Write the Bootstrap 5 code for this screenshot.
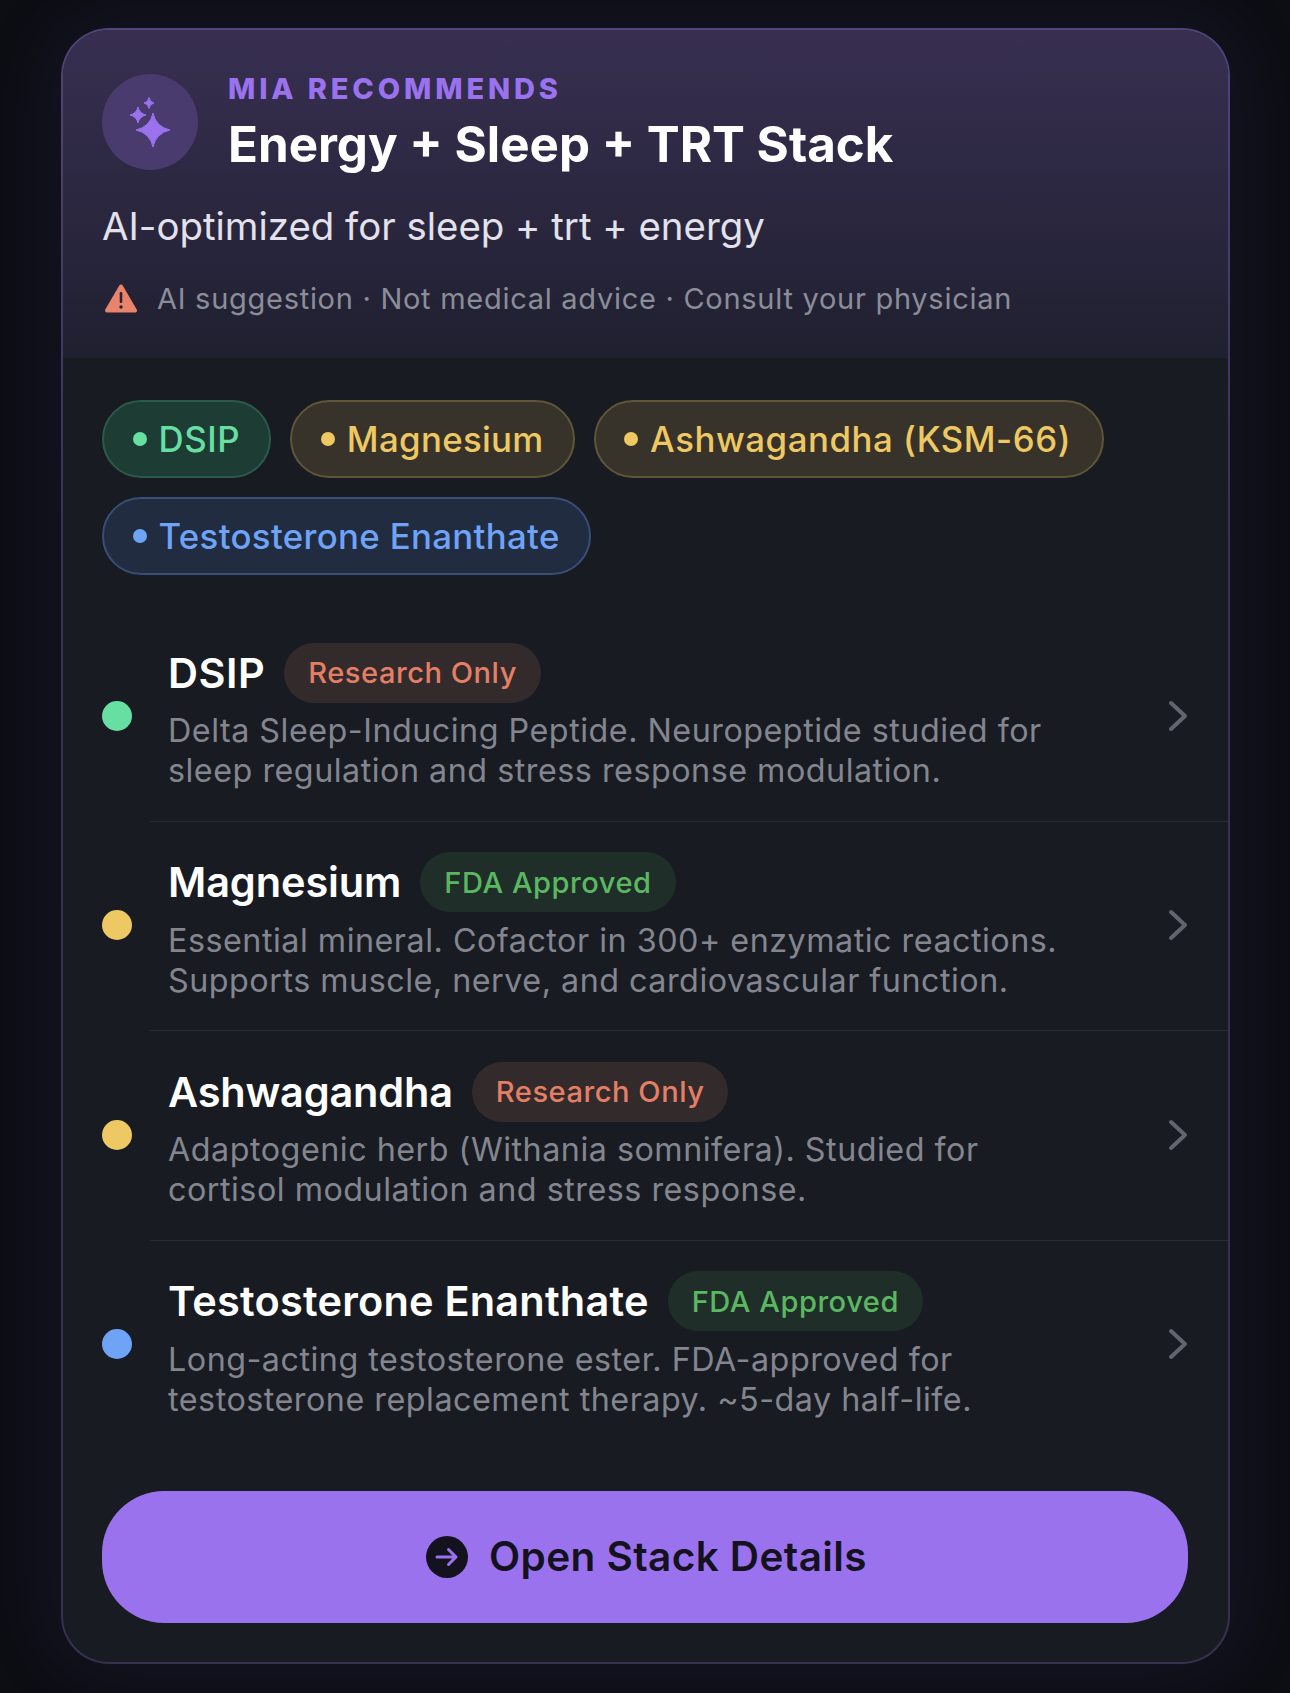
<!DOCTYPE html>
<html lang="en">
<head>
<meta charset="utf-8">
<title>Mia Recommends</title>
<link href="https://cdn.jsdelivr.net/npm/bootstrap@5.3.0/dist/css/bootstrap.min.css" rel="stylesheet">
<style>
html,body{height:100%}
body{background:#0c0e13;font-family:Inter,"Liberation Sans",sans-serif;color:#fff;overflow:hidden}
.stage{padding:28px 60px 30px 61px;height:1693px}
.panel{height:1636px;border:2px solid transparent;border-radius:48px;background:linear-gradient(#181b22,#181b22) padding-box,linear-gradient(180deg,#50457a 0%,#3a3156 30%,#37304f 100%) border-box;overflow:hidden;box-shadow:0 0 80px 12px rgba(120,90,220,.09)}
.head{height:328px;padding:41.5px 40px 0 39px;background:linear-gradient(180deg,#382f51 0%,#1f2030 100%)}
.spark{width:96px;height:96px;background:#4a3b6f;flex:none}
.hcol{padding-left:6px}
.kicker{font-size:29px;line-height:34px;font-weight:800;letter-spacing:3.85px;color:#9a72ee}
.ttl{font-size:49.3px;line-height:58px;font-weight:700;margin:9px 0 0;letter-spacing:0}
.sub{font-size:38.4px;line-height:46px;color:#e3e1ea;margin-top:30px}
.warn{font-size:29px;line-height:36px;color:#8b8d99;letter-spacing:.72px;margin-top:32px;padding-left:3px;gap:20px}
.content{padding:42px 40px 0 39px}
.chips{gap:19px}
.chip{height:78px;border:2px solid;padding:0 29px 0 28.5px;font-size:34.8px;font-weight:500;gap:12px;letter-spacing:.33px}
.chip i{width:14px;height:14px;border-radius:50%;background:currentColor}
.chip-short{letter-spacing:.6px}
.chip-long{letter-spacing:.54px;padding-right:31px}
.c-g{color:#67dfa3;background:#1c3c34;border-color:#2b5a4a}
.c-y{color:#eec862;background:#38332a;border-color:#5f5538}
.c-b{color:#6ea3f6;background:#212c41;border-color:#384e76}
.rows{margin-top:36px;margin-right:-40px}
.item{height:209.5px;padding-right:40px;position:relative;gap:36px}
.item+.item::before{content:"";position:absolute;left:48px;right:0;top:0;border-top:1.5px solid #292b33}
.pt{width:30px;height:30px;flex:none}
.txt{padding-top:2px}
.nm{font-size:41.5px;line-height:60px;font-weight:600;margin:0}
.nm-a{letter-spacing:.5px}
.nm-b{letter-spacing:-.12px}
.nm-c{letter-spacing:-.2px}
.nm-d{letter-spacing:.2px}
.tag{height:60px;padding:1px 24px 0;font-size:29.1px;font-weight:500;letter-spacing:.52px}
.namerow{gap:19px}
.t-r{background:#332a2c;color:#e47f66}
.t-g{background:#1f2e29;color:#5cb761}
.ds{font-size:32.3px;line-height:40px;color:#84868f;letter-spacing:.5px;margin:8.5px 0 0}
.chev{flex:none}
.go{height:132px;width:100%;margin-top:42px;padding-left:15px;background:#9b72ee;border:0;border-radius:62px;color:#15121f;font-size:40.5px;font-weight:600;gap:21px;letter-spacing:.4px}
.go:hover,.go:active{background:#9b72ee!important;color:#15121f!important}
</style>
</head>
<body>
<div class="stage">
  <div class="panel">
    <div class="head">
      <div class="d-flex align-items-center gap-4">
        <div class="spark rounded-circle">
          <svg width="96" height="96" viewBox="0 0 96 96" fill="#9a72ee" stroke="#9a72ee" stroke-width="1" stroke-linejoin="round"><path d="M51 39Q53.800 52.700 68 56Q53.800 59.300 51 73Q48.200 59.300 34 56Q48.200 52.700 51 39z"/><path d="M36 33Q37.400 39.600 44 41Q37.400 42.400 36 49Q34.600 42.400 28 41Q34.600 39.600 36 33z"/><path d="M47 23.500Q47.800 28.200 52 29Q47.800 29.800 47 34.500Q46.200 29.800 42 29Q46.200 28.200 47 23.500z"/></svg>
        </div>
        <div class="hcol">
          <div class="kicker">MIA RECOMMENDS</div>
          <h1 class="ttl">Energy + Sleep + TRT Stack</h1>
        </div>
      </div>
      <div class="sub">AI-optimized for sleep + trt + energy</div>
      <div class="warn d-flex align-items-center">
        <svg width="32" height="29" viewBox="0 0 32 29"><path d="M16 2.500 30 26.500H2z" fill="#e8846b" stroke="#e8846b" stroke-width="4" stroke-linejoin="round"/><rect x="14.700" y="8" width="2.600" height="11" rx="1.200" fill="#2a2436"/><circle cx="16" cy="23" r="1.700" fill="#2a2436"/></svg>
        <span>AI suggestion · Not medical advice · Consult your physician</span>
      </div>
    </div>
    <div class="content">
      <div class="chips d-flex flex-wrap">
        <span class="chip chip-short c-g rounded-pill d-inline-flex align-items-center"><i></i>DSIP</span>
        <span class="chip c-y rounded-pill d-inline-flex align-items-center"><i></i>Magnesium</span>
        <span class="chip chip-long c-y rounded-pill d-inline-flex align-items-center"><i></i>Ashwagandha (KSM-66)</span>
        <span class="chip c-b rounded-pill d-inline-flex align-items-center"><i></i>Testosterone Enanthate</span>
      </div>
      <div class="rows">
        <div class="item d-flex align-items-center">
          <span class="pt rounded-circle" style="background:#67dfa3"></span>
          <div class="txt flex-grow-1">
            <div class="namerow d-flex align-items-center"><h2 class="nm nm-a">DSIP</h2><span class="tag t-r rounded-pill d-inline-flex align-items-center">Research Only</span></div>
            <p class="ds">Delta Sleep-Inducing Peptide. Neuropeptide studied for<br>sleep regulation and stress response modulation.</p>
          </div>
          <svg class="chev" width="20" height="32" viewBox="0 0 20 32" fill="none" stroke="#63656e" stroke-width="4" stroke-linecap="round" stroke-linejoin="round"><path d="M3 3l14 13L3 29"/></svg>
        </div>
        <div class="item d-flex align-items-center">
          <span class="pt rounded-circle" style="background:#eec862"></span>
          <div class="txt flex-grow-1">
            <div class="namerow d-flex align-items-center"><h2 class="nm nm-b">Magnesium</h2><span class="tag t-g rounded-pill d-inline-flex align-items-center">FDA Approved</span></div>
            <p class="ds">Essential mineral. Cofactor in 300+ enzymatic reactions.<br>Supports muscle, nerve, and cardiovascular function.</p>
          </div>
          <svg class="chev" width="20" height="32" viewBox="0 0 20 32" fill="none" stroke="#63656e" stroke-width="4" stroke-linecap="round" stroke-linejoin="round"><path d="M3 3l14 13L3 29"/></svg>
        </div>
        <div class="item d-flex align-items-center">
          <span class="pt rounded-circle" style="background:#eec862"></span>
          <div class="txt flex-grow-1">
            <div class="namerow d-flex align-items-center"><h2 class="nm nm-c">Ashwagandha</h2><span class="tag t-r rounded-pill d-inline-flex align-items-center">Research Only</span></div>
            <p class="ds">Adaptogenic herb (Withania somnifera). Studied for<br>cortisol modulation and stress response.</p>
          </div>
          <svg class="chev" width="20" height="32" viewBox="0 0 20 32" fill="none" stroke="#63656e" stroke-width="4" stroke-linecap="round" stroke-linejoin="round"><path d="M3 3l14 13L3 29"/></svg>
        </div>
        <div class="item d-flex align-items-center">
          <span class="pt rounded-circle" style="background:#6ea3f6"></span>
          <div class="txt flex-grow-1">
            <div class="namerow d-flex align-items-center"><h2 class="nm nm-d">Testosterone Enanthate</h2><span class="tag t-g rounded-pill d-inline-flex align-items-center">FDA Approved</span></div>
            <p class="ds">Long-acting testosterone ester. FDA-approved for<br>testosterone replacement therapy. ~5-day half-life.</p>
          </div>
          <svg class="chev" width="20" height="32" viewBox="0 0 20 32" fill="none" stroke="#63656e" stroke-width="4" stroke-linecap="round" stroke-linejoin="round"><path d="M3 3l14 13L3 29"/></svg>
        </div>
      </div>
      <button class="btn go d-flex align-items-center justify-content-center" type="button">
        <svg width="42" height="42" viewBox="0 0 42 42"><circle cx="21" cy="21" r="21" fill="#15121f"/><path d="M11 21h19M22.500 13.500 30 21l-7.500 7.500" fill="none" stroke="#9b72ee" stroke-width="3" stroke-linecap="round" stroke-linejoin="round"/></svg>
        <span>Open Stack Details</span>
      </button>
    </div>
  </div>
</div>
<script src="https://cdn.jsdelivr.net/npm/bootstrap@5.3.0/dist/js/bootstrap.bundle.min.js"></script>
</body>
</html>
